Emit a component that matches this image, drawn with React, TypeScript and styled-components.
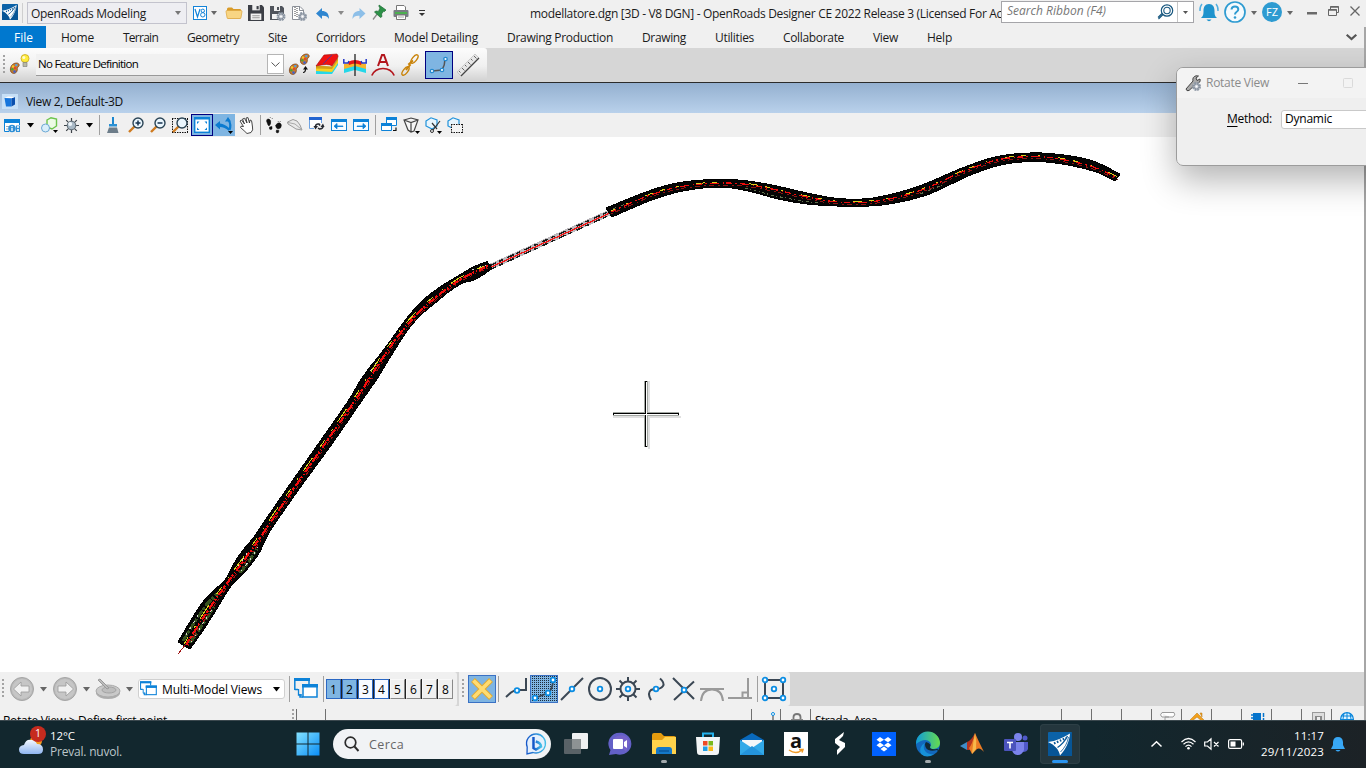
import React, { useLayoutEffect, useRef, useState } from "react";
import styled, { createGlobalStyle } from "styled-components";

const Global = createGlobalStyle`
  * { box-sizing: border-box; }
  html, body { margin: 0; padding: 0; overflow: hidden; }
  body { font-family: "Open Sans", "Noto Sans", sans-serif; font-size: 12px; color: #1b1b1b; }
`;

const Window = styled.div`
  position: relative;
  width: 1366px;
  height: 768px;
  overflow: hidden;
  display: flex;
  flex-direction: column;
  background: #f0f0f0;
`;

const Bar = styled.div<{ $h: number; $bg?: string; $align?: string }>`
  display: flex;
  flex: none;
  align-items: ${(p) => p.$align ?? "center"};
  height: ${(p) => p.$h}px;
  background: ${(p) => p.$bg ?? "#f0f0f0"};
  white-space: nowrap;
  overflow: hidden;
`;

const Icon = styled.svg<{ $l?: number; $dy?: number }>`
  display: block;
  flex: none;
  margin-left: ${(p) => p.$l ?? 0}px;
  margin-top: ${(p) => (p.$dy ?? 0) * 2}px;
  overflow: visible;
`;

const TextSpan = styled.span<{ $l?: number; $c?: string; $size?: number; $italic?: boolean; $dy?: number }>`
  flex: none;
  display: inline-block;
  white-space: pre;
  line-height: 16px;
  margin-left: ${(p) => p.$l ?? 0}px;
  margin-top: ${(p) => (p.$dy ?? 0) * 2}px;
  color: ${(p) => p.$c ?? "#1b1b1b"};
  font-size: ${(p) => p.$size ?? 12}px;
  font-style: ${(p) => (p.$italic ? "italic" : "normal")};
`;

type LabelProps = {
  w: number;
  l?: number;
  c?: string;
  size?: number;
  italic?: boolean;
  dy?: number;
  children: React.ReactNode;
};

/* A caption whose tracking is set so that it fills exactly `w` pixels. */
function Label({ w, l, c, size, italic, dy, children }: LabelProps) {
  const ref = useRef<HTMLSpanElement>(null);
  const [ls, setLs] = useState(0);
  useLayoutEffect(() => {
    const el = ref.current;
    if (!el) return;
    const natural = el.getBoundingClientRect().width;
    setLs((w - natural) / Math.max(1, (el.textContent ?? "").length));
  }, [w]);
  return (
    <TextSpan ref={ref} $l={l} $c={c} $size={size} $italic={italic} $dy={dy} style={{ letterSpacing: ls }}>
      {children}
    </TextSpan>
  );
}

const Separator = styled.i<{ $l?: number; $h?: number; $c?: string }>`
  flex: none;
  width: 1px;
  height: ${(p) => p.$h ?? 20}px;
  margin-left: ${(p) => p.$l ?? 0}px;
  background: ${(p) => p.$c ?? "#a0a0a0"};
`;

const Grip = styled.i<{ $l?: number }>`
  flex: none;
  width: 2px;
  height: 20px;
  margin-left: ${(p) => p.$l ?? 0}px;
  background: repeating-linear-gradient(#a3a3a3 0 2px, transparent 2px 4px);
`;

const Down = ({ l, s = 3, c = "#555", h }: { l: number; s?: number; c?: string; h?: number }) => (
  <Icon $l={l} width={s * 2} height={h ?? s + 1} viewBox={`0 0 ${s * 2} ${h ?? s + 1}`}>
    <path d={`M0 0H${s * 2}L${s} ${h ?? s + 1}Z`} fill={c} />
  </Icon>
);

/* ---------- title bar ---------- */

const WorkflowBox = styled.div`
  flex: none;
  display: flex;
  align-items: center;
  width: 160px;
  height: 22px;
  margin-left: 4px;
  border: 1px solid #c3c3cd;
  background: #eeeef2;
`;

const TitleClip = styled.div`
  flex: none;
  width: 471px;
  margin-left: 105px;
  overflow: hidden;
  display: flex;
`;

const SearchBox = styled.div`
  flex: none;
  display: flex;
  align-items: center;
  align-self: flex-start;
  width: 193px;
  height: 22px;
  margin-top: 1px;
  background: #fff;
  border: 1px solid #a5a5a9;
`;

const Avatar = styled.div`
  flex: none;
  width: 20px;
  height: 20px;
  margin-left: 5px;
  margin-top: -2px;
  border-radius: 50%;
  background: #2e9bd1;
  display: flex;
  align-items: center;
  justify-content: center;
`;

const RoadLogo = ({ size, l, dy }: { size: number; l?: number; dy?: number }) => (
  <Icon $l={l} $dy={dy} width={size} height={size} viewBox="0 0 24 24">
    <rect width="24" height="24" rx="1" fill="#0b62a8" />
    <path d="M0 12L24 1V24H0Z" fill="#075596" />
    <path d="M0 10C8 9 15 6 22 1.500C21.500 9 18 17 12 23.500C11 18 7 13 0 10Z" fill="#fff" />
    <path d="M19.500 4C17 9 14 12.500 9.500 15.500" stroke="#075596" strokeWidth="1.300" fill="none" />
    <path d="M20.500 5C19.500 11 16.500 16 12.500 20" stroke="#075596" strokeWidth=".8" fill="none" />
    <path d="M6 11.500L18 6" stroke="#075596" strokeWidth="2.200" strokeDasharray="1.600 1.600" />
  </Icon>
);

const Gear = ({ x, y }: { x: number; y: number }) => (
  <g>
    <circle cx={x} cy={y} r="3.600" fill="#eef0f3" stroke="#8e98a5" strokeWidth="1.800" strokeDasharray="2 .8" />
    <circle cx={x} cy={y} r="2.600" fill="#c9ced6" stroke="#7c8693" />
    <circle cx={x} cy={y} r="1" fill="#fff" />
  </g>
);

function TitleBar() {
  return (
    <Bar $h={26}>
      <RoadLogo size={16} l={2} dy={-1} />
      <Separator $l={4} $h={20} $c="#cfcfcf" />
      <WorkflowBox>
        <Label l={3} w={115} dy={0.5}>OpenRoads Modeling</Label>
        <Down l={29} s={3} c="#777" />
      </WorkflowBox>
      <Icon $l={6} width="14" height="14" viewBox="0 0 14 14">
        <rect x=".5" y=".5" width="13" height="13" fill="#fff" stroke="#1383d8" />
        <path d="M2 3L4.500 11L7 3" stroke="#1383d8" fill="none" strokeWidth="1.200" />
        <circle cx="9.800" cy="4.800" r="1.700" stroke="#1383d8" fill="none" />
        <circle cx="9.800" cy="8.800" r="2.200" stroke="#1383d8" fill="none" />
      </Icon>
      <Down l={4} s={3} c="#666" />
      <Icon $l={9} width="16" height="12" viewBox="0 0 16 12">
        <path d="M1 2Q1 .5 2.500 .5H6L7.500 2H14Q15 2 15 3V10Q15 11.500 13.500 11.500H2.500Q1 11.500 1 10Z" fill="#d99b28" />
        <path d="M0 4.500Q0 3.500 1 3.500H15Q16 3.500 16 4.500L15 10.500Q15 11.500 14 11.500H2Q1 11.500 1 10.500Z" fill="#f8d583" stroke="#dba33c" strokeWidth=".7" />
      </Icon>
      <Icon $l={6} $dy={-0.5} width="16" height="16" viewBox="0 0 15 15">
        <path d="M0 0H13L15 2V15H0Z" fill="#3c3f46" />
        <rect x="4" width="7" height="5" fill="#eee" /><rect x="8" y="1" width="2" height="3" fill="#3c3f46" />
        <rect x="2.500" y="8" width="10" height="6" fill="#f3f3f3" /><path d="M4 10H11M4 12H11" stroke="#999" />
      </Icon>
      <Icon $l={6} width="16" height="15" viewBox="0 0 16 15">
        <path d="M0 0H12L14 2V14H0Z" fill="#50545c" />
        <rect x="4" width="6" height="5" fill="#eee" /><rect x="7" y="1" width="2" height="3" fill="#50545c" />
        <rect x="2" y="8" width="9" height="5" fill="#f3f3f3" />
        <Gear x={11} y={10.500} />
      </Icon>
      <Icon $l={6} width="16" height="15" viewBox="0 0 16 15">
        <path d="M.5 .5H8L11.500 4V13.500H.5Z" fill="#fff" stroke="#8a8f97" />
        <path d="M3 1V11M5 2V12" stroke="#777" strokeWidth="1.400" strokeDasharray="1 1" />
        <path d="M7.500 .5V4.500H11.500" fill="none" stroke="#8a8f97" />
        <Gear x={10.500} y={10.500} />
      </Icon>
      <Icon $l={8} width="14" height="11" viewBox="0 0 14 11">
        <path d="M0 5.500L6 0V3C10 3 13 5 13 11C11.500 8.500 10 7.500 6 7.800V11Z" fill="#2f86d0" />
      </Icon>
      <Down l={8} s={3} c="#8a8a8a" />
      <Icon $l={8} width="14" height="11" viewBox="0 0 14 11">
        <path d="M13.500 5.500L7.500 0V3C3.500 3 .5 5 .5 11C2 8.500 3.500 7.500 7.500 7.800V11Z" fill="#8dbfe8" />
      </Icon>
      <Icon $l={7} $dy={-1} width="14" height="15" viewBox="0 0 14 15">
        <path d="M0 14.500L5 8" stroke="#888" strokeWidth="1.300" />
        <path d="M6 0L13 5L11.500 6.500L10.500 6.300L8.500 9L9 11.500L7.500 12.500L1.500 7L3 6L5.500 6.400L7 3L6 1.500Z" fill="#2c9147" stroke="#1c6b33" strokeWidth=".7" />
      </Icon>
      <Icon $l={6} $dy={-0.5} width="16" height="15" viewBox="0 0 16 15">
        <path d="M3.500 5V.5H11L12.500 2V5" fill="#fff" stroke="#777" />
        <rect x=".5" y="5" width="15" height="7" rx="1" fill="#777c82" />
        <rect x="2" y="7" width="12" height="2" fill="#4cb04f" />
        <path d="M3.500 10H12.500V14.500H3.500Z" fill="#fff" stroke="#777" /><path d="M5 12H11" stroke="#aaa" />
      </Icon>
      <Icon $l={10} width="6" height="7" viewBox="0 0 6 7">
        <path d="M0 .5H6" stroke="#333" /><path d="M0 3H6L3 6Z" fill="#333" />
      </Icon>
      <TitleClip>
        <Label w={472} dy={0.5}>modellatore.dgn [3D - V8 DGN] - OpenRoads Designer CE 2022 Release 3 (Licensed For Ac</Label>
      </TitleClip>
      <SearchBox>
        <Label l={5} w={99} italic c="#777" dy={-1.5}>Search Ribbon (F4)</Label>
        <Icon $l={51} width="17" height="16" viewBox="0 0 17 16">
          <circle cx="10" cy="6.500" r="5.700" fill="none" stroke="#17577f" strokeWidth="1.200" />
          <circle cx="10" cy="6.500" r="3.200" fill="none" stroke="#17577f" strokeWidth="1.100" />
          <path d="M6 10.500L1.500 15M5 9.500L1 13.500" stroke="#17577f" strokeWidth="1.100" />
        </Icon>
        <Separator $l={3} $c="#c6c6c6" />
        <Down l={5} s={2.5} h={3} c="#555" />
      </SearchBox>
      <Icon $l={5} $dy={-1} width="20" height="19" viewBox="0 0 20 19">
        <path d="M10 1C14 1 15.500 4 15.500 8C15.500 12 16 13 18 15H2C4 13 4.500 12 4.500 8C4.500 4 6 1 10 1Z" fill="#1e93cd" />
        <path d="M7.500 16.500Q10 20 12.500 16.500Z" fill="#1e93cd" />
        <path d="M3 1Q.5 4 1 8M17 1Q19.500 4 19 8" stroke="#52afe0" fill="none" strokeWidth="1.400" />
      </Icon>
      <Icon $l={5} $dy={-1} width="22" height="22" viewBox="0 0 22 22">
        <circle cx="11" cy="11" r="10" fill="#f5fafd" stroke="#2e9bd1" strokeWidth="1.700" />
        <path d="M7.500 8.500Q7.700 5.500 11 5.500Q14.300 5.500 14.300 8.300Q14.300 10 12.500 11Q11 12 11 13.500" stroke="#2e9bd1" strokeWidth="2" fill="none" />
        <circle cx="11" cy="16.500" r="1.300" fill="#2e9bd1" />
      </Icon>
      <Down l={5} s={3} c="#666" />
      <Avatar><TextSpan $c="#fff" $size={11}>FZ</TextSpan></Avatar>
      <Down l={5} s={3} c="#666" />
      <Icon $l={14} width="10" height="3" viewBox="0 0 10 3"><rect y="0" width="10" height="2.500" fill="#6a6a6a" /></Icon>
      <Icon $l={11} $dy={-2.5} width="11" height="10" viewBox="0 0 11 10">
        <path d="M.5 3.500H8.500V9.500H.5ZM2.500 3.500V.5H10.500V6.500H8.500" fill="none" stroke="#666" /><path d="M.5 4H8.500M2.500 1H10.500" stroke="#666" strokeWidth="1.500" />
      </Icon>
      <Icon $l={11} $dy={-2.5} width="10" height="10" viewBox="0 0 10 10"><path d="M.5 .5L9.500 9.500M9.500 .5L.5 9.500" stroke="#666" strokeWidth="1.300" /></Icon>
    </Bar>
  );
}

/* ---------- ribbon tabs ---------- */

const FileTab = styled.div`
  flex: none;
  width: 46px;
  height: 22px;
  padding-left: 14px;
  margin-right: -14px;
  background: #0078cf;
  display: flex;
  align-items: center;
`;

const Chevron = styled.div`
  margin-left: auto;
  margin-right: 9px;
`;

const tabs: [string, number][] = [
  ["Home", 33], ["Terrain", 35], ["Geometry", 52], ["Site", 19], ["Corridors", 49], ["Model Detailing", 84],
  ["Drawing Production", 106], ["Drawing", 44], ["Utilities", 39], ["Collaborate", 61], ["View", 25], ["Help", 25],
];

function Tabs() {
  return (
    <Bar $h={22}>
      <FileTab><Label w={19} c="#fff" dy={1}>File</Label></FileTab>
      {tabs.map(([t, w]) => <Label key={t} l={29} w={w} dy={1}>{t}</Label>)}
      <Chevron>
        <Icon width="11" height="6" viewBox="0 0 11 6"><path d="M.7 .7L5.500 5L10.300 .7" stroke="#555" strokeWidth="2.200" fill="none" /></Icon>
      </Chevron>
    </Bar>
  );
}

/* ---------- feature definition toolbar ---------- */

const FeatureBar = styled.div`
  flex: none;
  display: flex;
  align-items: center;
  width: 487px;
  height: 33px;
  background: linear-gradient(#fcfcfc, #f0f0f0 55%, #d2d2d2);
  border-radius: 0 3px 3px 0;
`;

const FeatureCombo = styled.div`
  flex: none;
  display: flex;
  align-items: center;
  width: 248px;
  height: 22px;
  margin-left: 6px;
  background: #f1f1f1;
  border-bottom: 1px solid #999;
`;

const ComboButton = styled.div`
  width: 17px;
  height: 20px;
  margin-left: auto;
  background: #fff;
  border: 1px solid #b5b5b5;
  display: flex;
  align-items: center;
`;

const PickedTool = styled.div<{ $w: number; $h: number; $l?: number; $c?: string; $dots?: boolean }>`
  flex: none;
  width: ${(p) => p.$w}px;
  height: ${(p) => p.$h}px;
  margin-left: ${(p) => p.$l ?? 0}px;
  border: 1px solid ${(p) => p.$c ?? "#000080"};
  background: ${(p) =>
    p.$dots
      ? "conic-gradient(#1e2c3a 25%, transparent 0) 0 0 / 2px 2px, #7fb5e2"
      : "#7fb5e2"};
  display: flex;
  align-items: center;
  justify-content: center;
`;

const Palette = ({ x, y }: { x: number; y: number }) => (
  <g transform={`translate(${x} ${y})`}>
    <path d="M1 9C-1 5 2 0 6.500 0C9.500 0 10 3 8 4C6.500 5 8 6 7 8C6 11 2.500 11 1 9Z" fill="#c97a2e" stroke="#6d3510" strokeWidth=".7" />
    <circle cx="3" cy="3.500" r="1.200" fill="#f6c72b" /><circle cx="6.300" cy="2.100" r="1.200" fill="#4ca2ec" />
    <circle cx="2.300" cy="6.300" r="1.200" fill="#48a638" /><circle cx="4.500" cy="8.600" r="1.300" fill="#3e62ce" />
    <circle cx="5" cy="5" r="1" fill="#e33" />
  </g>
);

function FeatureToolbar() {
  return (
    <Bar $h={34} $bg="#d6d6d6" $align="flex-start">
      <FeatureBar>
        <Grip $l={3} />
        <Icon $l={5} width="20" height="21" viewBox="0 0 20 21">
          <Palette x={0} y={9} />
          <circle cx="15" cy="4.500" r="4" fill="#ffec3d" stroke="#c8a71f" strokeWidth=".8" />
          <path d="M13 8.500H17V12.500H13Z" fill="#b9b9a5" stroke="#777" strokeWidth=".6" />
          <circle cx="13.800" cy="3.400" r="1.500" fill="#fffbd0" />
        </Icon>
        <FeatureCombo>
          <Label l={2} w={100} size={11.5} c="#000">No Feature Definition</Label>
          <ComboButton><Icon $l={3} width="9" height="5" viewBox="0 0 9 5"><path d="M.5 .5L4.500 4.300L8.500 .5" stroke="#555" fill="none" /></Icon></ComboButton>
        </FeatureCombo>
        <Icon $l={5} width="22" height="21" viewBox="0 0 22 21">
          <Palette x={0} y={10} /><Palette x={11} y={0} />
          <path d="M14 18.500Q16.500 18.500 16.500 15" fill="none" stroke="#111" strokeWidth="1.200" /><path d="M16.500 12L14 15.500H19Z" fill="#111" />
        </Icon>
        <Icon $l={5} width="23" height="21" viewBox="0 0 23 21">
          <path d="M0 16L5 12L15 13L22 7V11L16 20H0Z" fill="#25d7e8" />
          <path d="M0 13L16 14L22 5V9L16 18L0 17Z" fill="#f7d01f" />
          <path d="M0 11.500L16 12.500L22 3.500V6L16 15L0 14.500Z" fill="#d4a016" />
          <path d="M8 1L21 0Q23 2 21.500 4L16 12Q13 9 0 12Q5 5 8 1Z" fill="#f01212" stroke="#9c1010" strokeWidth=".6" />
          <path d="M16 1L7 10" stroke="#3838b0" strokeWidth=".8" />
        </Icon>
        <Icon $l={4} width="24" height="22" viewBox="0 0 24 22">
          <path d="M1 14L12 11L23 14V19L12 16L1 19Z" fill="#25d7e8" />
          <path d="M1 10L12 8L23 10V15L12 12L1 15Z" fill="#f7b52b" />
          <path d="M5 8Q12 4 19 8L18 11Q12 8 6 11Z" fill="#e51717" />
          <path d="M.8 5V9H5L6 7M23.200 5V9H19L18 7" stroke="#2436c8" strokeWidth="1.500" fill="none" />
          <path d="M12 0V22" stroke="#111" strokeWidth="1.200" />
        </Icon>
        <Icon $l={4} width="24" height="22" viewBox="0 0 24 22">
          <path d="M7 12L11 1H13L17 12M8.500 8H15.500" stroke="#b3161d" strokeWidth="2" fill="none" />
          <path d="M.8 21.500Q4 14.500 12 14.500Q20 14.500 23.200 21.500" stroke="#b3161d" strokeWidth="1.700" fill="none" />
        </Icon>
        <Icon $l={6} width="18" height="22" viewBox="0 0 18 22">
          <g stroke="#c98309" strokeWidth="1.400" fill="none"><ellipse cx="13.500" cy="5" rx="2.200" ry="5" transform="rotate(38 13.500 5)" /><ellipse cx="4.500" cy="17" rx="2.200" ry="5" transform="rotate(38 4.500 17)" /></g>
          <path d="M5 16L9 11L8 10L12 6.500" stroke="#c98309" strokeWidth="1.900" fill="none" />
        </Icon>
        <PickedTool $l={6} $w={28} $h={28}>
          <Icon width="18" height="18" viewBox="0 0 18 18">
            <path d="M2 15L12 14Q15 9 15 3" stroke="#555" strokeWidth="1.500" fill="none" />
            <g fill="#fff" stroke="#2389cf" strokeWidth="1.300"><circle cx="2" cy="15" r="1.700" /><circle cx="12" cy="14" r="1.700" /><circle cx="15.500" cy="3" r="1.700" /></g>
          </Icon>
        </PickedTool>
        <Icon $l={3} width="24" height="24" viewBox="0 0 24 24">
          <path d="M1 19L19 1L23 5L5 23Z" fill="#e6e6e6" stroke="#bbb" strokeWidth=".7" />
          <path d="M5 23L23 5" stroke="#444" strokeWidth="1.200" />
          <path d="M3 18L4.500 19.500M6 15L8.500 17.500M9 12L10.500 13.500M12 9L14.500 11.500M15 6L16.500 7.500M18 3L20.500 5.500" stroke="#666" />
        </Icon>
      </FeatureBar>
    </Bar>
  );
}

/* ---------- view window ---------- */

const ViewTitle = styled.div`
  flex: none;
  display: flex;
  align-items: center;
  height: 31px;
  border-top: 1px solid #2b2b2b;
  padding-top: 6px;
  background: linear-gradient(#94b0d0, #b9d1eb);
`;

const blue = "#0c82d8";

const WinIcon = ({ l, dir }: { l: number; dir: number }) => (
  <Icon $l={l} width="16" height="12" viewBox="0 0 16 12">
    <rect x=".5" y=".5" width="15" height="11" fill="#f8fcff" stroke={blue} /><rect width="16" height="3" fill={blue} />
    <path d={dir < 0 ? "M12 7H6V4.500L3 7.200L6 9.800V7.500H12Z" : "M4 7H10V4.500L13 7.200L10 9.800V7.500H4Z"} fill={blue} stroke={blue} strokeWidth=".8" />
  </Icon>
);

const Lens = ({ sign }: { sign: string }) => (
  <g>
    <path d="M6.500 9.500L1 15" stroke="#cf7b20" strokeWidth="2.400" />
    <circle cx="10" cy="6" r="5" fill="#eaf6fd" stroke="#2b4455" strokeWidth="1.400" />
    <path d={sign} stroke="#15314e" strokeWidth="1.500" />
  </g>
);

const Corner = ({ x, y }: { x: number; y: number }) => <path d={`M${x} ${y}h5l-2.500 3z`} fill="#000" />;

function ViewToolbar() {
  return (
    <Bar $h={24}>
      <Icon $l={4} $dy={0.5} width="17" height="15" viewBox="0 0 17 15">
        <path d="M.5 13.500V1.500H15.500V7" fill="#fff" stroke={blue} /><rect y="1" width="16" height="4" fill={blue} />
        <path d="M.5 13.500H5" stroke={blue} /><path d="M2 8.500H5M2 11H4" stroke="#9ab" />
        <circle cx="8" cy="10.500" r="3.800" fill="#2e8fd6" /><path d="M12 7.500H16V14H12Z" fill="#2e8fd6" />
        <path d="M8 8V9M8 9.800V13M13 9H15M13 12H15" stroke="#fff" strokeWidth="1.300" />
      </Icon>
      <Down l={6} s={3.5} c="#000" />
      <Icon $l={7} width="18" height="17" viewBox="0 0 18 17">
        <path d="M6 3L10 .7L15.500 2V9L11 12L6 10Z" fill="#edfbe6" stroke="#6cc44c" strokeWidth="1.400" />
        <circle cx="4.500" cy="11" r="4" fill="#d9eefb" stroke="#6ba8d4" /><Corner x={12} y={13} />
      </Icon>
      <Icon $l={4} width="17" height="17" viewBox="0 0 17 17">
        <path d="M8.500 1V16M1 8.500H16M3.200 3.200L13.800 13.800M13.800 3.200L3.200 13.800" stroke="#3c4248" strokeWidth="1.200" />
        <circle cx="8.500" cy="8.500" r="4.300" fill="#a9b9c6" stroke="#5c6973" /><circle cx="7.200" cy="7" r="2" fill="#eef5fa" />
      </Icon>
      <Down l={6} s={3.5} c="#000" />
      <Separator $l={6} />
      <Icon $l={6} width="14" height="17" viewBox="0 0 14 17">
        <path d="M6 0H8V8H6Z" fill="#1c87cf" /><path d="M3 7H11V9.500H3Z" fill="#2c91d4" /><path d="M3 10.500H11L12.500 16H1Z" fill="#6d7d8a" />
      </Icon>
      <Icon $l={8} width="16" height="16" viewBox="0 0 16 16"><Lens sign="M7.500 6H12.500M10 3.500V8.500" /></Icon>
      <Icon $l={6} width="16" height="16" viewBox="0 0 16 16"><Lens sign="M7.500 6H12.500" /></Icon>
      <Icon $l={6} width="16" height="16" viewBox="0 0 16 16"><path d="M.5 1.500V15.500M15.500 1.500V15.500M0 1.500H16M0 15.500H16" fill="none" stroke="#111" strokeDasharray="1.500 1" /><Lens sign="" /></Icon>
      <PickedTool $l={3} $w={22} $h={22}>
        <Icon width="16" height="16" viewBox="0 0 16 16">
          <rect x=".7" y=".7" width="14.600" height="14.600" fill="#fff" stroke={blue} strokeWidth="1.400" />
          <path d="M0 1.500H16" stroke={blue} strokeWidth="2" />
          <path d="M3 4.500H5.500L3 7ZM13 4.500V7L10.500 4.500ZM3 13V10.500L5.500 13ZM13 13H10.500L13 10.500Z" fill={blue} />
        </Icon>
      </PickedTool>
      <PickedTool $w={22} $h={22} $c="#7fb5e2">
        <Icon width="18" height="17" viewBox="0 0 18 17">
          <path d="M0 8L5 4V6.500Q10 7 14 11L14 14Q9.500 10 5 10V12.500Z" fill="#0c7bd0" />
          <path d="M13.500 3Q16.500 7.500 14.500 13" stroke="#0c7bd0" strokeWidth="2.200" fill="none" /><path d="M10 4.500L13 0L16 4.500Z" fill="#0c7bd0" />
          <Corner x={13} y={14} />
        </Icon>
      </PickedTool>
      <Icon $l={4} width="15" height="17" viewBox="0 0 15 17">
        <path d="M1 4L2.500 3L5.500 7L3.500 2L5.500 1.300L8 6L7 1L9 .6L10.500 6L11 3Q12.800 3 12.800 5L13.500 10Q14.500 13 12 15.500L8 16.500Q5.500 14 1.500 10.500Q1 8.500 4.500 9.500Z" fill="#fff" stroke="#333" strokeWidth=".9" />
      </Icon>
      <Separator $l={6} />
      <Icon $l={4} width="18" height="16" viewBox="0 0 17 16">
        <path d="M1 4Q1 1.500 3.500 2Q6 3 5 7L3.500 9L2.500 8ZM4 10L6.500 9.500L6.500 12Q5 13 4 12Z" fill="#111" stroke="#111" strokeWidth=".5" />
        <path d="M10 8.500Q12 5 14.500 6Q17 7.500 15 11L12.500 12L11 11ZM11 13L13.500 13.500Q13.500 16 11.500 16Q10 15.500 11 13Z" fill="#111" stroke="#111" strokeWidth=".5" />
        <path d="M4 0h1v1M6 1h1v1M12 4h1v1M14 4h1v1" fill="#111" />
      </Icon>
      <Icon $l={4} width="16" height="12" viewBox="0 0 16 12">
        <path d="M.5 3L6 .5L10 2L13 6L15 11L9 10L6 8L1 5Z" fill="#e9e9e9" stroke="#9b9b9b" /><path d="M1 3.500L8 5L14 10" stroke="#aaa" fill="none" />
      </Icon>
      <Icon $l={6} $dy={-0.5} width="16" height="15" viewBox="0 0 16 15">
        <path d="M.5 11.500V1.500H12.500V6M.5 11.500H5" fill="#fff" stroke="#6ea3e3" /><rect x="0" y="0" width="13" height="3" fill="#2264d0" />
        <path d="M6.500 9Q7 6.500 10 7L11 8.500M14 9Q14 12 10.500 12L9 11" stroke="#25282f" strokeWidth="1.500" fill="none" />
        <path d="M4.500 9H9L6.500 12.500ZM11.500 10H15.500L14 6.500Z" fill="#25282f" />
      </Icon>
      <WinIcon l={6} dir={-1} />
      <WinIcon l={6} dir={1} />
      <Separator $l={6} />
      <Icon $l={5} width="17" height="16" viewBox="0 0 17 16">
        <path d="M5.500 1.500H15.500V8.500H5.500Z" fill="#fff" stroke={blue} /><rect x="5" y="0" width="11" height="3" fill={blue} />
        <path d="M.5 7.500H10.500V13.500H.5Z" fill="#fff" stroke={blue} /><rect y="6" width="11" height="3" fill={blue} />
        <path d="M12 13.500H15V10.500" stroke="#111" fill="none" strokeWidth="1.200" />
      </Icon>
      <Icon $l={5} width="17" height="17" viewBox="0 0 17 17">
        <path d="M1 3L8 1L15 3L11 14L8 15L5 13ZM1 3L8 5.500L15 3M8 5.500V15" fill="#f5f5f5" stroke="#444" strokeWidth="1.200" /><Corner x={12} y={14} />
      </Icon>
      <Icon $l={5} width="17" height="17" viewBox="0 0 17 17">
        <path d="M1 4L6 .8L12 3V9L7 12L1 9Z" fill="#e8f5fd" stroke="#2092da" strokeWidth="1.200" />
        <path d="M15 4L8 13M7 6L12 12" stroke="#333" strokeWidth="1.200" /><circle cx="7" cy="14" r="1.500" stroke="#333" fill="none" /><Corner x={12} y={14} />
      </Icon>
      <Icon $l={5} width="17" height="17" viewBox="0 0 17 17">
        <path d="M1 4L6 .8L12 3V9L7 12L1 9Z" fill="#e8f5fd" stroke="#2092da" strokeWidth="1.200" />
        <rect x="4" y="7" width="12" height="9" fill="#f4f4f4" /><path d="M4 7.500H16M4 15.500H16M4.500 7V16M15.500 7V16" stroke="#111" strokeDasharray="1.500 1" />
      </Icon>
    </Bar>
  );
}

const Canvas = styled.svg`
  display: block;
  flex: none;
  background: #fff;
`;

type Pt = [number, number];

/* Smooth curve through the points (Catmull-Rom turned into cubic Béziers). */
function smooth(pts: Pt[], start = "M"): string {
  let d = `${start}${pts[0][0]} ${pts[0][1]}`;
  for (let i = 0; i < pts.length - 1; i++) {
    const p0 = pts[Math.max(0, i - 1)];
    const p1 = pts[i];
    const p2 = pts[i + 1];
    const p3 = pts[Math.min(pts.length - 1, i + 2)];
    d += `C${p1[0] + (p2[0] - p0[0]) / 6} ${p1[1] + (p2[1] - p0[1]) / 6} ${p2[0] - (p3[0] - p1[0]) / 6} ${p2[1] - (p3[1] - p1[1]) / 6} ${p2[0]} ${p2[1]}`;
  }
  return d;
}

const lowerLeft: Pt[] = [
  [178, 642], [188, 625], [202, 603], [213, 591], [225, 580], [233, 565], [243, 550], [254, 537], [266, 519], [291.5, 482],
  [319.5, 442], [347.5, 402], [360, 381], [370, 367], [382, 352], [393, 337], [403, 323], [411, 313], [423, 300], [440, 287], [463, 273], [473, 267], [487, 261.5],
];
const lowerRight: Pt[] = [
  [492, 268], [486, 273], [474, 280], [463, 283], [450, 291], [434, 304], [420, 316], [407, 331], [388, 361], [377, 379],
  [361, 402], [332, 444], [302, 485], [283, 512], [269, 533], [258, 555], [244, 573], [231, 586], [215, 612], [202, 632], [190, 649],
];
const upperTop: Pt[] = [
  [606, 208], [643, 193], [672, 184], [703, 180], [738, 180], [772, 185], [807, 193], [838, 198.5], [869, 198.5], [900, 192],
  [927, 183], [962, 168], [993, 157.5], [1020, 153.5], [1050, 153.5], [1090, 160], [1120, 174],
];
const upperBottom: Pt[] = [
  [1115, 181], [1096, 172], [1065, 164.5], [1036, 161.5], [1003, 164.5], [972, 174.5], [944, 187.5], [924, 196], [893, 203.5], [869, 206],
  [836, 206], [807, 204], [778, 199], [748, 191], [720, 187], [683, 191], [652, 200], [612, 217],
];
const lowerMid: Pt[] = [
  [186, 645], [205, 615], [228, 582], [255, 545], [274, 517], [299, 481], [354, 402], [369, 379], [388, 350], [408, 324], [428, 304], [458, 281], [488, 266],
];
const upperMid: Pt[] = [
  [611, 212], [645, 197], [674, 188], [703, 184], [738, 183.5], [772, 189], [807, 197], [838, 202], [869, 202], [900, 196.5],
  [927, 188], [962, 172], [993, 161], [1020, 157], [1050, 157.5], [1090, 166], [1118, 178],
];

function Drawing() {
  const lower = smooth(lowerMid);
  const upper = smooth(upperMid);
  return (
    <Canvas width="1366" height="535" viewBox="0 137 1366 535" shapeRendering="crispEdges">
      <path d="M490 267L611 212" stroke="#bcb9bd" strokeWidth="6" />
      <path d="M490 265.500L611 210.500M490 269.500L611 214.500" stroke="#1c1c1c" strokeWidth="1.500" strokeDasharray="7 3 4 5" />
      <path d="M490 267.500L611 212.500" stroke="#f01818" strokeWidth="1.300" />
      <path d={smooth(lowerLeft) + smooth(lowerRight, "L") + "Z"} fill="#050505" stroke="#000" />
      <path d={smooth(upperTop) + smooth(upperBottom, "L") + "Z"} fill="#050505" stroke="#000" />
      <path d="M183 641L192 626L206 605L217 594M190 643L203 624L214 607M240 573L250 560L257 549" stroke="#35511f" strokeWidth="3" fill="none" strokeDasharray="8 1 3 2" />
      <path d="M191 642L205 620L216 603M186 635L200 612M238 566L248 552M241 571L253 556L259 545M472 270L486 265M376 363L370 372" stroke="#d8d8d0" strokeWidth="1" fill="none" strokeDasharray="2 5 3 4" />
      <path d="M745 188L775 196L805 201.500L820 203M920 194L945 184M613 209L630 202" stroke="#60704c" strokeWidth="1" fill="none" strokeDasharray="3 2 1 3" />
      <g fill="none">
        <path d={lower} stroke="#d9d21c" strokeWidth="1" strokeDasharray="8 11 2 9 16 14" transform="translate(-2 -1)" />
        <path d={upper} stroke="#d9d21c" strokeWidth="1" strokeDasharray="5 12 2 18 9 7" transform="translate(0 -1)" />
        <path d={lower} stroke="#f20d0d" strokeWidth="2.200" strokeDasharray="7 1 3 2 9 1 2 2 1 2" />
        <path d={lower} stroke="#a80c0c" strokeWidth="1" strokeDasharray="2 4 1 3 5 3" transform="translate(2 1)" />
        <path d={upper} stroke="#ec0c0c" strokeWidth="1.300" strokeDasharray="6 3 2 3 9 4 1 2" />
        <path d={upper} stroke="#8c1414" strokeWidth="1" strokeDasharray="2 3 5 4" transform="translate(0 2)" />
      </g>
      <path d="M178 654L186 644" stroke="#a01515" />
      <path d="M613 416H681V418H613ZM648 381H650V449H648Z" fill="#e0e0e0" />
      <path d="M613 412H679V416H613ZM644 381H648V447H644Z" fill="#a3a8a3" />
      <path d="M613 413H679V414H613ZM645 381H646V447H645Z" fill="#000" />
      <path d="M614 414H678V415H614ZM646 382H647V446H646Z" fill="#fff" />
      <path d="M613 414H614V415H613ZM678 414H679V415H678ZM646 381H647V382H646ZM646 446H647V447H646Z" fill="#000" />
    </Canvas>
  );
}

/* ---------- lower toolbars ---------- */

const Dock = styled.div<{ $w: number; $l?: number }>`
  flex: none;
  display: flex;
  align-items: center;
  width: ${(p) => p.$w}px;
  height: 34px;
  margin-left: ${(p) => p.$l ?? 0}px;
  background: #f0f0f0;
  border-radius: 0 3px 3px 0;
`;

const ModelCombo = styled.div`
  flex: none;
  display: flex;
  align-items: center;
  width: 147px;
  height: 20px;
  margin-left: 5px;
  background: #fff;
  border: 1px solid #d0d0d0;
  border-radius: 3px;
`;

const ViewKeys = styled.div`
  display: flex;
  flex: none;
  margin-left: 2px;
`;

const ViewKey = styled.div<{ $mode: "on" | "open" | "off" }>`
  flex: none;
  width: 15px;
  height: 20px;
  margin-right: 1px;
  padding-top: 1px;
  display: flex;
  align-items: center;
  justify-content: center;
  color: #000;
  line-height: 16px;
  background: ${(p) => (p.$mode === "on" ? "#7fb5e2" : p.$mode === "open" ? "#f7faff" : "#f0f0f0")};
  border: 1px solid ${(p) => (p.$mode === "off" ? "#f8f8f8" : "#2b68c4")};
  border-right: 1px solid ${(p) => (p.$mode === "off" ? "#8a8a8a" : "#2b68c4")};
  border-bottom-color: ${(p) => (p.$mode === "off" ? "#8a8a8a" : "#2b68c4")};
  box-shadow: 1px 0 0 #222;
  &:last-child { box-shadow: none; }
`;

const Cascade = ({ w, h, l }: { w: number; h: number; l: number }) => (
  <Icon $l={l} width={w} height={h} viewBox="0 0 24 22">
    <path d="M.8 12V1H15V6M.8 11.500H4M6 16V19H9" fill="none" stroke={blue} strokeWidth="1.500" /><rect width="16" height="3" fill={blue} />
    <path d="M4.500 11V17H8" fill="none" stroke={blue} strokeWidth="1.300" />
    <rect x="9" y="7" width="14" height="12" fill="#fff" stroke={blue} strokeWidth="1.500" /><rect x="8" y="6" width="16" height="3.500" fill={blue} />
  </Icon>
);

const Snap = ({ l, w = 24, c = "#3b4754", children }: { l: number; w?: number; c?: string; children: React.ReactNode }) => (
  <Icon $l={l} width={w} height="24" viewBox={`0 0 ${w} 24`} fill="none" stroke={c} strokeWidth="2">{children}</Icon>
);

const Node = ({ x, y }: { x: number; y: number }) => <circle cx={x} cy={y} r="2.300" fill="#fff" stroke="#0b8de3" strokeWidth="1.800" />;

const RoundArrow = ({ l, flip }: { l: number; flip?: boolean }) => (
  <Icon $l={l} width="24" height="24" viewBox="0 0 24 24">
    <circle cx="12" cy="12" r="11.500" fill="#b9b9b9" stroke="#a5a5a5" /><circle cx="12" cy="12" r="10" fill="#c6c6c6" />
    <g transform={flip ? "matrix(-1 0 0 1 24 0)" : undefined}><path d="M3.500 12L11 5V9H19V15H11V19Z" fill="#f1f1f1" stroke="#999" strokeWidth=".8" /></g>
  </Icon>
);

function LowerToolbars() {
  return (
    <Bar $h={34} $bg="#d6d6d6">
      <Dock $w={457}>
        <Grip $l={2} />
        <RoundArrow l={6} />
        <Down l={6} s={3.5} c="#666" />
        <RoundArrow l={6} flip />
        <Down l={6} s={3.5} c="#666" />
        <Icon $l={6} width="24" height="20" viewBox="0 0 24 20">
          <path d="M0 12V15Q3 20 12 20Q21 20 24 15V12Z" fill="#aeaeae" />
          <ellipse cx="12" cy="12" rx="12" ry="6" fill="#c9c9c9" stroke="#aaa" /><ellipse cx="13" cy="11" rx="7" ry="3" fill="#bdbdbd" stroke="#a3a3a3" />
          <path d="M2 1L11 10L13 9L4 0Z" fill="#bbb" stroke="#999" />
        </Icon>
        <Down l={6} s={3.5} c="#666" />
        <ModelCombo>
          <Cascade l={1} w={17} h={16} />
          <Label l={5} w={100} c="#000" dy={0.5}>Multi-Model Views</Label>
          <Down l={11} s={3.5} c="#000" />
        </ModelCombo>
        <Separator $l={4} $h={26} />
        <Cascade l={4} w={24} h={22} />
        <Separator $l={5} $h={26} />
        <ViewKeys>
          {[1, 2, 3, 4, 5, 6, 7, 8].map((n) => (
            <ViewKey key={n} $mode={n < 3 ? "on" : n < 5 ? "open" : "off"}>{n}</ViewKey>
          ))}
        </ViewKeys>
      </Dock>
      <Dock $l={2} $w={331}>
        <Grip $l={3} />
        <PickedTool $l={4} $w={28} $h={28} $c="#3a71c4">
          <Icon width="22" height="22" viewBox="0 0 22 22"><path d="M2 2L20 20M20 2L2 20" stroke="#e1a92c" strokeWidth="5.500" /><path d="M2.500 2.500L19.500 19.500M19.500 2.500L2.500 19.500" stroke="#ffdc72" strokeWidth="3.800" /></Icon>
        </PickedTool>
        <Separator $l={2} $h={26} />
        <Snap l={7} w={22}><path d="M0 20L5 15.500Q8 13 12 13H20V1" /><Node x={11} y={13.5} /></Snap>
        <PickedTool $l={2} $w={28} $h={28} $c="#3a71c4" $dots>
          <Icon width="26" height="26" viewBox="0 0 26 26" fill="none" stroke="#3b4754" strokeWidth="1.800"><path d="M4 22L17 17Q22 13 22 4" /><Node x={4} y={22} /><Node x={17} y={17} /><Node x={22} y={4} /></Icon>
        </PickedTool>
        <Snap l={2}><path d="M1 23L23 1" /><Node x={12} y={12} /></Snap>
        <Snap l={4}><circle cx="12" cy="12" r="11" /><Node x={12} y={12} /></Snap>
        <Snap l={4}><circle cx="12" cy="12" r="7.500" /><path d="M12 0V5M12 19V24M0 12H5M19 12H24M3.500 3.500L7 7M17 17L20.500 20.500M20.500 3.500L17 7M7 17L3.500 20.500" /><Node x={12} y={12} /></Snap>
        <Snap l={8} w={17}><path d="M3 23Q-1 16 3 13Q5 12 8 12Q13 12 15 9Q17 6 12 1.500" /><Node x={8} y={12} /></Snap>
        <Snap l={7}><path d="M1 1L22 22M22 4.500L2 23" /><Node x={12} y={13} /></Snap>
        <Snap l={4} c="#9a9a9a"><path d="M0 12H24M1 24Q2 12.500 12 12.500Q22 12.500 23 24" /></Snap>
        <Snap l={4} c="#9a9a9a"><path d="M20 1V21M0 21H24M14.500 21V15.500H20" /></Snap>
        <Separator $l={5} $h={26} />
        <Snap l={4}><rect x="3" y="3" width="18" height="18" /><Node x={3} y={3} /><Node x={21} y={3} /><Node x={3} y={21} /><Node x={21} y={21} /><Node x={12} y={12} /></Snap>
      </Dock>
    </Bar>
  );
}

/* ---------- status bar ---------- */

const StatusBar = styled.div`
  flex: none;
  display: flex;
  align-items: flex-start;
  height: 14px;
  padding-top: 3px;
  overflow: hidden;
  background: #f0f0f0;
`;

const StatusText = styled.div<{ $w: number; $l: number }>`
  flex: none;
  display: flex;
  width: ${(p) => p.$w}px;
  margin-left: ${(p) => p.$l}px;
  padding-top: 4px;
`;

const StatusCell = styled.div<{ $w: number; $l?: number }>`
  flex: none;
  width: ${(p) => p.$w}px;
  height: 20px;
  margin-left: ${(p) => p.$l ?? 0}px;
  padding-top: 3px;
  border-left: 1px solid #707070;
  display: flex;
  justify-content: center;
  align-items: flex-start;
`;

function Status() {
  return (
    <StatusBar>
      <StatusText $l={3} $w={289}><Label w={164} c="#000">Rotate View &gt; Define first point</Label></StatusText>
      <Grip />
      <StatusCell $l={2} $w={29} />
      <StatusCell $w={426} />
      <StatusCell $w={29}><Icon $l={14} width="6" height="16" viewBox="0 0 6 16"><path d="M3 2V9L0 12" stroke="#333" fill="none" /><circle cx="3" cy="2" r="1.500" fill="#fff" stroke="#0b8de3" /></Icon></StatusCell>
      <StatusCell $w={30}><Icon $l={2} width="12" height="14" viewBox="0 0 12 14"><path d="M2.500 8V5Q2.500 2 6 2Q9.500 2 9.500 5V8" fill="none" stroke="#777" strokeWidth="1.800" /><rect y="7" width="12" height="7" fill="#8a8a8a" /></Icon></StatusCell>
      <Separator $h={20} $c="#707070" />
      <StatusText $l={4} $w={128}><Label w={62} c="#000">Strada, Area</Label></StatusText>
      <StatusCell $w={118} />
      <StatusCell $w={30} />
      <StatusCell $w={30} />
      <StatusCell $w={30} />
      <StatusCell $w={30}><Icon $l={3} width="16" height="12" viewBox="0 0 16 12"><path d="M2 .5H14Q16 3 13 5H5V8M2 .5Q-1 3 2 5H9" fill="#fff" stroke="#999" /></Icon></StatusCell>
      <StatusCell $w={30}><Icon width="16" height="12" viewBox="0 0 16 12"><path d="M0 9L8 1L16 9L14 10L8 5L2 10ZM11 1H13V5Z" fill="#f3a01c" stroke="#b57411" strokeWidth=".5" /></Icon></StatusCell>
      <StatusCell $w={30} />
      <StatusCell $w={30}><Icon $l={4} width="15" height="9" viewBox="0 0 15 9"><path d="M2 1H10V9H2Z" fill="#0674cc" /><path d="M0 3H3M0 6H3M12.500 1V5M12.500 6V9" stroke="#0674cc" strokeWidth="1.500" /></Icon></StatusCell>
      <StatusCell $w={30} />
      <StatusCell $w={30}><Icon $l={3} width="13" height="12" viewBox="0 0 13 12"><rect x=".5" y=".5" width="12" height="11" fill="#ddd" stroke="#999" /><path d="M3 4H10V9H3Z" fill="#888" /><path d="M5 5H8V9H5Z" fill="#eee" /></Icon></StatusCell>
      <StatusCell $w={30}><Icon width="14" height="14" viewBox="0 0 14 14"><circle cx="7" cy="7" r="6.300" fill="#dff3ff" stroke="#0b86db" strokeWidth="1.300" /><path d="M7 .5V13M1 4H13M0 7.500H14M4 1Q2 7 4 13M10 1Q12 7 10 13" stroke="#0b86db" fill="none" /></Icon></StatusCell>
    </StatusBar>
  );
}

/* ---------- taskbar ---------- */

const TaskbarRow = styled.div`
  position: relative;
  flex: none;
  display: flex;
  align-items: center;
  height: 48px;
  background: linear-gradient(90deg, #12272e 0 80%, #1c2226);
  box-shadow: inset 0 1px 0 #3b484e;
`;

const Weather = styled.div`
  position: relative;
  flex: none;
  width: 28px;
  height: 28px;
  margin-left: 18px;
`;

const Badge = styled.span`
  position: absolute;
  left: 12px;
  top: -4px;
  width: 16px;
  height: 16px;
  border-radius: 50%;
  background: #c62b1e;
  color: #fff;
  font-size: 10.5px;
  line-height: 15px;
  text-align: center;
`;

const TwoLines = styled.div<{ $w: number; $l: number; $right?: boolean }>`
  flex: none;
  display: flex;
  flex-direction: column;
  align-items: ${(p) => (p.$right ? "flex-end" : "flex-start")};
  width: ${(p) => p.$w}px;
  margin-left: ${(p) => p.$l}px;
`;

const SearchPill = styled.div`
  flex: none;
  display: flex;
  align-items: center;
  width: 218px;
  height: 30px;
  margin-left: 13px;
  border-radius: 15px;
  background: #f1f3f5;
`;

const AppSlot = styled.div<{ $on?: boolean; $mark?: string; $mw?: number }>`
  position: relative;
  flex: none;
  width: 40px;
  height: 40px;
  margin-right: 4px;
  border-radius: 4px;
  display: flex;
  align-items: center;
  justify-content: center;
  background: ${(p) => (p.$on ? "#24363d" : "transparent")};
  box-shadow: ${(p) => (p.$on ? "inset 0 0 0 1px #2d3f46" : "none")};
  &::after {
    content: "";
    position: absolute;
    bottom: 1px;
    width: ${(p) => p.$mw ?? 6}px;
    height: 3px;
    border-radius: 2px;
    background: ${(p) => p.$mark ?? "transparent"};
  }
`;

const Apps = styled.div`
  display: flex;
  flex: none;
  margin-left: 5px;
`;

const AmazonTile = styled.div`
  width: 24px;
  height: 24px;
  background: #fff;
  color: #111;
  font-weight: 700;
  font-size: 20px;
  line-height: 17px;
  text-align: center;
  display: flex;
  flex-direction: column;
  align-items: center;
`;

function Taskbar() {
  return (
    <TaskbarRow>
      <Weather>
        <Icon width="28" height="28" viewBox="0 0 28 28">
          <defs><linearGradient id="cl" x2="0" y2="1"><stop stopColor="#f3f8ff" /><stop offset="1" stopColor="#8fb5f0" /></linearGradient></defs>
          <circle cx="18" cy="11" r="6" fill="#f29a22" />
          <path d="M6 24Q1 24 1 19.500Q1 15.500 6 15Q8 9 13 10Q17 9.500 19 14Q25 14 25 19.500Q25 24 20 24Z" fill="url(#cl)" />
        </Icon>
        <Badge>1</Badge>
      </Weather>
      <TwoLines $l={4} $w={246}>
        <Label w={25} size={11.5} c="#fff">12°C</Label>
        <Label w={72} size={12} c="#bcc6ca">Preval. nuvol.</Label>
      </TwoLines>
      <Icon width="24" height="24" viewBox="0 0 24 24">
        <defs><linearGradient id="wn" x2="1" y2="1"><stop stopColor="#84e2ff" /><stop offset="1" stopColor="#0a8df6" /></linearGradient></defs>
        <path d="M.5 .5H11.500V11.500H.5ZM12.500 .5H23.500V11.500H12.500ZM.5 12.500H11.500V23.500H.5ZM12.500 12.500H23.500V23.500H12.500Z" fill="url(#wn)" />
      </Icon>
      <SearchPill>
        <Icon $l={11} width="15" height="16" viewBox="0 0 15 16"><circle cx="6.500" cy="6.500" r="5.300" stroke="#2b2b2b" strokeWidth="1.700" fill="none" /><path d="M10.500 10.500L14.500 15" stroke="#2b2b2b" strokeWidth="1.900" /></Icon>
        <Label l={10} w={35} size={12.5} c="#666" dy={0.5}>Cerca</Label>
        <Icon $l={122} width="21" height="22" viewBox="0 0 21 22">
          <defs><linearGradient id="bg" x2="1"><stop stopColor="#1557c9" /><stop offset="1" stopColor="#43bfe8" /></linearGradient></defs>
          <path d="M10.500 1A9.500 9.500 0 1 1 7 19.500L1 21L1.200 14A9.500 9.500 0 0 1 10.500 1Z" fill="#e5f0fc" stroke="url(#bg)" strokeWidth="1.300" />
          <path d="M7.500 4V15L10 16.500L15 13.500Q15 10 9.800 8.500" stroke="url(#bg)" strokeWidth="2.500" fill="none" />
        </Icon>
      </SearchPill>
      <Apps>
        <AppSlot><Icon width="24" height="22" viewBox="0 0 24 22"><rect x="8" width="16" height="16" rx="1" fill="#f0f1f2" /><rect y="6" width="17" height="15" rx="1" fill="#596267" /><path d="M8 6H17V16H8Z" fill="#8d9294" /></Icon></AppSlot>
        <AppSlot><Icon width="24" height="24" viewBox="0 0 24 24"><path d="M1 23L2.500 18A11.500 11 0 1 1 8 22Z" fill="#6360c7" /><path d="M6 6Q12 1 19 5L22 10L18 20Z" fill="#8c68cc" opacity=".45" /><rect x="5" y="7" width="10" height="10" rx="1" fill="#fff" /><path d="M16 10L19 8V16L16 14Z" fill="#fff" /></Icon></AppSlot>
        <AppSlot $mark="#a3aaad"><Icon width="24" height="22" viewBox="0 0 24 22"><path d="M0 2Q0 0 2 0H9L12 3H22Q24 3 24 5V18H0Z" fill="#e49b0e" /><path d="M0 7H10L13 4H24V21H0Z" fill="#ffd24b" /><path d="M4 21V17Q4 14 7 14H17Q20 14 20 17V21Z" fill="#1478c8" /><path d="M7 18H17" stroke="#0a579e" strokeWidth="1.500" /></Icon></AppSlot>
        <AppSlot><Icon width="24" height="24" viewBox="0 0 24 24"><path d="M7 6V1.500H17V6" stroke="#25b2ec" strokeWidth="2" fill="none" /><path d="M0 5H24L23 20Q23 23 20 23H4Q1 23 1 20Z" fill="#f3f5f6" /><path d="M7 9H11.500V13.500H7Z" fill="#ef4b25" /><path d="M12.500 9H17V13.500H12.500Z" fill="#79b91d" /><path d="M7 14.500H11.500V19H7Z" fill="#219fe6" /><path d="M12.500 14.500H17V19H12.500Z" fill="#f9b91a" /></Icon></AppSlot>
        <AppSlot><Icon width="24" height="22" viewBox="0 0 24 22"><path d="M0 7L12 0L24 7V21H0Z" fill="#0969bb" /><path d="M2 7H22V15H2Z" fill="#f4f7f9" /><path d="M0 7L12 15L24 7V22H0Z" fill="#32a9e8" /><path d="M0 22L12 13L24 22Z" fill="#2494dc" /></Icon></AppSlot>
        <AppSlot><AmazonTile>a<Icon width="15" height="5" viewBox="0 0 15 5"><path d="M0 1Q7 6 13 1M10 .5H14L13 3.500" fill="none" stroke="#ef9a27" strokeWidth="1.500" /></Icon></AmazonTile></AppSlot>
        <AppSlot><Icon width="12" height="24" viewBox="0 0 12 24"><path d="M10 0L1 7V11L6 15L3 18V23L11 15V11L5 8L9 4Z" fill="#fff" /></Icon></AppSlot>
        <AppSlot><Icon width="24" height="24" viewBox="0 0 24 24"><rect width="24" height="24" fill="#0061fe" /><path d="M8 5L12 7.700L8 10.300L4.500 7.700ZM16 5L19.500 7.700L16 10.300L12 7.700ZM8 10.500L12 13.200L8 15.800L4.500 13.200ZM16 10.500L19.500 13.200L16 15.800L12 13.200ZM12 14.500L15.500 17L12 19.500L8.500 17Z" fill="#fff" /></Icon></AppSlot>
        <AppSlot $mark="#a3aaad"><Icon width="24" height="24" viewBox="0 0 24 24">
          <defs><linearGradient id="eg" x2="1"><stop stopColor="#0f9bdc" /><stop offset="1" stopColor="#67dc4c" /></linearGradient></defs>
          <circle cx="12" cy="12" r="12" fill="#1268bd" /><path d="M0 12A12 12 0 0 1 24 11Q24 16 18 17Q14 17 14 15Q16 13 14 10Q9 5 0 12Z" fill="url(#eg)" /><path d="M10 10Q7 12 8 17Q10 23 18 22Q11 27 5 22Q2 15 10 10Z" fill="#1691d8" /><path d="M10 10Q8 12 10 16Q13 20 21 18L22 19Q23 17 21 17Q14 18 14 15Q16 12 10 10Z" fill="#102a35" />
        </Icon></AppSlot>
        <AppSlot><Icon width="24" height="22" viewBox="0 0 24 22"><path d="M0 13L7 9L11 13L7 17Z" fill="#408cc8" /><path d="M7 9Q11 8 15 0L11 17L7 17Z" fill="#b43420" /><path d="M15 0Q18 7 24 19Q20 14 17 16L12 21L9 15Q12 12 15 0Z" fill="#eb7b24" /><path d="M15 0Q17 8 16 16L12 21Q13 9 15 0Z" fill="#f8b84a" /></Icon></AppSlot>
        <AppSlot><Icon width="24" height="23" viewBox="0 0 24 23"><circle cx="14" cy="4" r="4" fill="#7b83eb" /><circle cx="21" cy="5" r="2.500" fill="#5059c9" /><path d="M17 9H24V16Q23 19 19 19Z" fill="#5059c9" /><path d="M8 9H20V17Q18 22 14 22Q9 22 8 17Z" fill="#7b83eb" /><rect y="6" width="12" height="12" rx="1" fill="#4b53bc" /><path d="M3 9.500H9M6 9.500V15.500" stroke="#fff" strokeWidth="1.600" /></Icon></AppSlot>
        <AppSlot $on $mark="#2a94ef" $mw={16}><RoadLogo size={24} /></AppSlot>
      </Apps>
      <Icon $l={67} width="11" height="6" viewBox="0 0 11 6"><path d="M.5 5.500L5.500 .7L10.500 5.500" stroke="#fff" strokeWidth="1.500" fill="none" /></Icon>
      <Icon $l={19} width="15" height="12" viewBox="0 0 15 12"><g fill="none" stroke="#fff" strokeWidth="1.200"><path d="M.5 4Q7.500 -3 14.500 4M2.500 6.300Q7.500 1.500 12.500 6.300M4.500 8.600Q7.500 5.700 10.500 8.600" /></g><circle cx="7.500" cy="10.300" r="1.300" fill="#fff" /></Icon>
      <Icon $l={8} width="16" height="12" viewBox="0 0 16 12"><path d="M.7 4H3.500L7 .8V11.200L3.500 8H.7ZM10 4L14.500 8.500M14.500 4L10 8.500" fill="none" stroke="#fff" strokeWidth="1.200" /></Icon>
      <Icon $l={8} width="16" height="10" viewBox="0 0 16 10"><rect x=".6" y=".6" width="13" height="8.800" rx="1.500" fill="none" stroke="#fff" strokeWidth="1.200" /><rect x="2.500" y="2.500" width="5" height="5" fill="#fff" /><path d="M15.300 3.500V6.500" stroke="#fff" strokeWidth="1.300" /></Icon>
      <TwoLines $l={13} $w={67} $right>
        <Label w={30} size={11.5} c="#fff">11:17</Label>
        <Label w={63} size={11.5} c="#fff">29/11/2023</Label>
      </TwoLines>
      <Icon $l={7} width="14" height="15" viewBox="0 0 14 15"><path d="M7 0Q11.500 0 12 5V8L14 12H0L2 8V5Q2.500 0 7 0ZM4.500 13H9.500Q7 16 4.500 13Z" fill="#38a7f5" /></Icon>
    </TaskbarRow>
  );
}

/* ---------- floating dialog ---------- */

const Dialog = styled.div`
  position: absolute;
  left: 1176px;
  top: 67px;
  width: 230px;
  height: 99px;
  background: #efefef;
  border: 1px solid #9c9c9c;
  border-radius: 7px;
  overflow: hidden;
`;

const DialogShade = styled.div`
  position: absolute;
  left: 1176px;
  top: 67px;
  width: 230px;
  height: 99px;
  border-radius: 7px;
  box-shadow: 0 14px 34px rgba(0, 0, 0, 0.3);
`;

const DialogTitle = styled.div`
  display: flex;
  align-items: center;
  height: 30px;
  background: #f3f3f3;
`;

const DialogRow = styled.div`
  display: flex;
  align-items: center;
  height: 20px;
  margin-top: 11px;
  padding-left: 50px;
`;

const Underlined = styled.span`
  text-decoration: underline;
  text-underline-offset: 3px;
`;

const Field = styled.div`
  display: flex;
  align-items: center;
  width: 130px;
  height: 19px;
  margin-left: 9px;
  padding-left: 3px;
  background: #fff;
  border: 1px solid #c9c9c9;
  border-radius: 3px;
`;

const WindowEdge = styled.i`
  position: absolute;
  right: 0;
  top: 27px;
  width: 2px;
  height: 693px;
  background: #a6a6a6;
`;

function RotateDialog() {
  return (
    <>
      <DialogShade />
      <Dialog>
        <DialogTitle>
          <Icon $l={8} $dy={-0.5} width="16" height="16" viewBox="0 0 16 16">
            <path d="M1 14L8 6Q7 2 11 .8L13.500 1L11 3L12 5.500L15 4Q16 8 11.500 8.500L4 15.500Q1.500 16.500 1 14Z" fill="#aaa" stroke="#444" /><Gear x={11.500} y={11.500} />
          </Icon>
          <Label l={5} w={63} c="#8b8b8b">Rotate View</Label>
          <Icon $l={29} width="10" height="1" viewBox="0 0 10 1"><rect width="10" height="1" fill="#777" /></Icon>
          <Icon $l={35} width="10" height="10" viewBox="0 0 10 10"><rect x=".5" y=".5" width="9" height="9" rx="1" fill="none" stroke="#dadada" /></Icon>
        </DialogTitle>
        <DialogRow>
          <Label w={45} c="#000"><Underlined>M</Underlined>ethod:</Label>
          <Field><Label w={47} c="#000">Dynamic</Label></Field>
        </DialogRow>
      </Dialog>
    </>
  );
}

export default function App() {
  return (
    <Window>
      <Global />
      <TitleBar />
      <Tabs />
      <FeatureToolbar />
      <ViewTitle>
        <Icon $l={2} width="16" height="15" viewBox="0 0 16 15">
          <rect width="16" height="15" fill="#c7e0f7" /><path d="M2.500 4H9.500V12.500H4Z" fill="#1675dc" /><path d="M9.500 4L13 3V10.500L9.500 12.500Z" fill="#0a4fae" /><path d="M2.500 4L6 2.500L13 3L9.500 4.200Z" fill="#fff" />
        </Icon>
        <Label l={8} w={97} c="#111" dy={1}>View 2, Default-3D</Label>
      </ViewTitle>
      <ViewToolbar />
      <Drawing />
      <LowerToolbars />
      <Status />
      <WindowEdge />
      <RotateDialog />
      <Taskbar />
    </Window>
  );
}
